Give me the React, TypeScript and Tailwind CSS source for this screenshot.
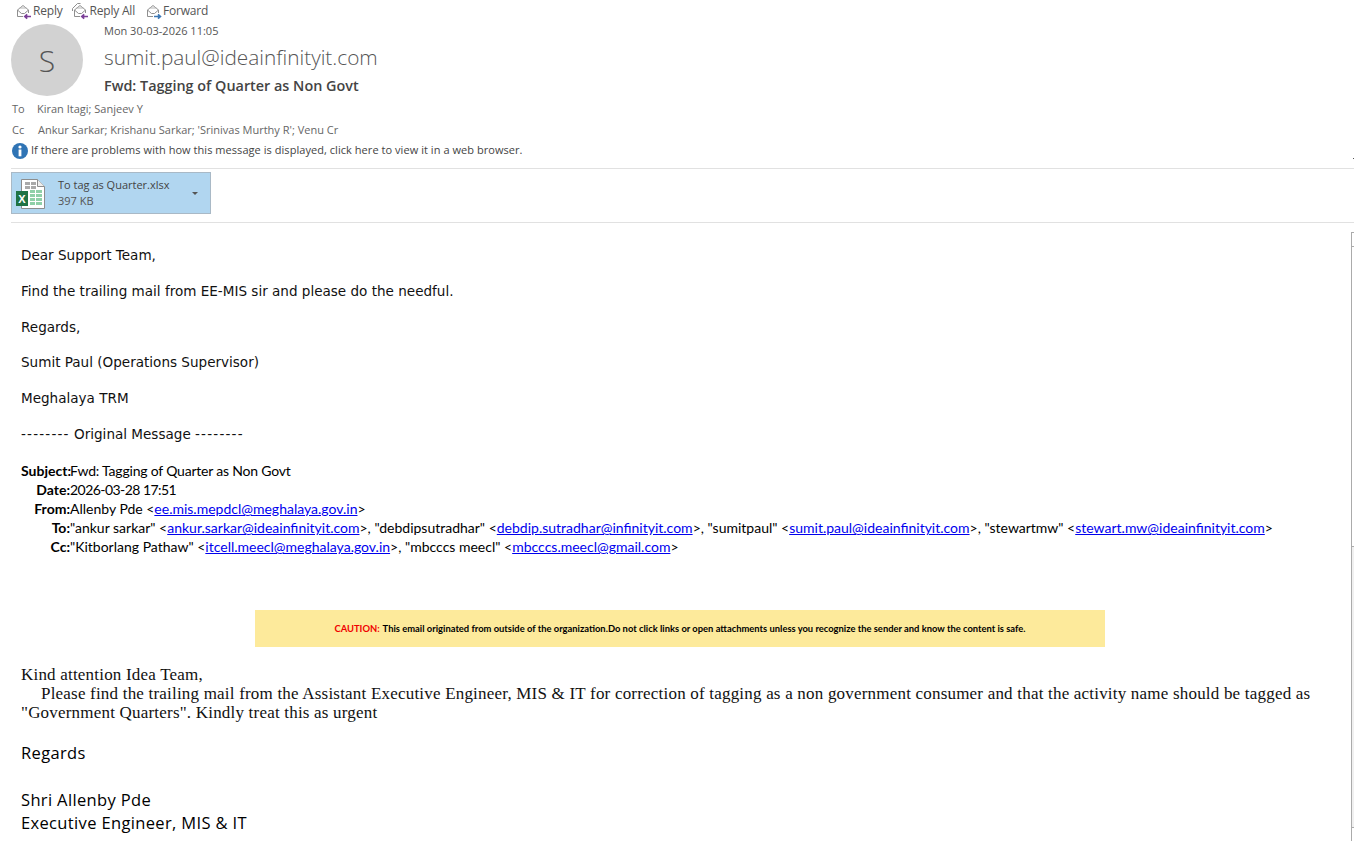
const segoe = "font-['Open_Sans','Noto_Sans',sans-serif]"

function MailIcon({ arrow, double }: { arrow: string; double?: boolean }) {
  const isForward = arrow === '#3f79b5'
  return (
    <svg width="18" height="17" viewBox="0 0 18 17" fill="none" className="shrink-0">
      {double && <path d="M.5 8V5.5L5.5.5h3" stroke="#8f8f8f" />}
      <path d="M8 13.5H2.5V7L8 2.5 13.5 7v3" stroke="#8f8f8f" />
      <path d="M2.5 7 6.5 10.5h3L13.5 7" stroke="#8f8f8f" />
      <path d="M4.5 5.5V5h7v.5" stroke="#b5b5b5" />
      {isForward ? (
        <path d="M9 13.5h6M13 11.3l2.4 2.2-2.4 2.2" stroke={arrow} strokeWidth="1.7" />
      ) : (
        <path d="M16 13.5H10M12.2 11.3 9.8 13.5l2.4 2.2" stroke={arrow} strokeWidth="1.7" />
      )}
    </svg>
  )
}

function ExcelIcon() {
  return (
    <svg width="29" height="31" viewBox="0 0 29 31" className="shrink-0">
      <path d="M5.5.5h16l7 7v22h-23z" fill="#fff" stroke="#8d8d8d" />
      <path d="M21.5.5v7h7" fill="#eeeeee" stroke="#8d8d8d" />
      <rect x="9" y="3" width="5" height="3" fill="#a9a9a9" />
      <rect x="15" y="3" width="5" height="3" fill="#a9a9a9" />
      <rect x="9" y="7" width="5" height="3" fill="#a9a9a9" />
      <rect x="15" y="7" width="5" height="3" fill="#a9a9a9" />
      {[11, 15, 19, 23].map((y) => (
        <g key={y}>
          <rect x="14" y={y} width="5" height="3" fill="#8fd0a8" />
          <rect x="20" y={y} width="6" height="3" fill="#8fd0a8" />
        </g>
      ))}
      <rect x="0" y="12" width="12" height="15" fill="#1f7244" />
      <text x="6" y="24" textAnchor="middle" fontSize="11" fontWeight="700" fill="#fff" fontFamily="Liberation Sans">
        X
      </text>
    </svg>
  )
}

function InfoIcon() {
  return (
    <svg width="16" height="16" viewBox="0 0 16 16" className="shrink-0">
      <circle cx="8" cy="8" r="8" fill="#2f74b5" />
      <circle cx="8" cy="4" r="1.6" fill="#fff" />
      <rect x="6.6" y="6.5" width="2.8" height="6.8" fill="#fff" />
    </svg>
  )
}

function HeaderRow({ label, value }: { label: string; value: React.ReactNode }) {
  return (
    <div className="flex h-[19px] items-center whitespace-nowrap">
      <b className="w-[49px] shrink-0 text-right font-bold">{label}</b>
      <span>{value}</span>
    </div>
  )
}

function Mail({ to }: { to: string }) {
  return <a className="text-[#0000ee] underline">{to}</a>
}

export default function App() {
  return (
    <div className={`relative h-[841px] w-[1354px] overflow-hidden bg-white ${segoe}`}>
      {/* Toolbar */}
      <div className="flex h-[22px] items-center pl-[15px] text-[12px] tracking-[-0.2px] text-[#555]">
        <MailIcon arrow="#7b3f98" />
        <span>Reply</span>
        <span className="ml-[9px]">
          <MailIcon arrow="#7b3f98" double />
        </span>
        <span>Reply All</span>
        <span className="ml-[10px]">
          <MailIcon arrow="#3f79b5" />
        </span>
        <span>Forward</span>
      </div>

      {/* Sender */}
      <div className="flex h-[77px] pt-[2px] pl-[11px]">
        <div className="flex h-[72px] w-[72px] items-center justify-center rounded-full bg-[#d2d2d2] text-[30px] font-light text-[#555]">
          S
        </div>
        <div className="ml-[21px]">
          <div className="h-[17px] text-[11px] leading-[14px] text-[#555]">Mon 30-03-2026 11:05</div>
          <div className="h-[33px] text-[20.8px] leading-[33px] font-light text-[#555]">sumit.paul@ideainfinityit.com</div>
          <div className="text-[14.4px] leading-[24px] font-semibold text-[#444]">Fwd: Tagging of Quarter as Non Govt</div>
        </div>
      </div>

      {/* Recipients */}
      <div className="pl-[12px] text-[11px] text-[#666]">
        <div className="flex h-[21px] items-center">
          <span className="w-[25px]">To</span>
          <span>Kiran Itagi; Sanjeev Y</span>
        </div>
        <div className="flex h-[21px] items-center">
          <span className="w-[26px]">Cc</span>
          <span>Ankur Sarkar; Krishanu Sarkar; 'Srinivas Murthy R'; Venu Cr</span>
        </div>
        <div className="flex h-[19px] items-center tracking-[0.05px] text-[#444]">
          <InfoIcon />
          <span className="ml-[3px]">If there are problems with how this message is displayed, click here to view it in a web browser.</span>
        </div>
      </div>

      {/* Attachment */}
      <div className="mt-[8px] ml-[11px] h-[55px] border-y border-[#e1e1e1] pt-[3px]">
        <div className="flex h-[42px] w-[200px] items-center border border-[#a9b9c6] bg-[#b1d6f0] pl-[4px] text-[11px] leading-[16px] text-[#444]">
          <span className="mt-[2px]">
            <ExcelIcon />
          </span>
          <div className="ml-[13px]">
            <div>To tag as Quarter.xlsx</div>
            <div className="text-[#555]">397 KB</div>
          </div>
          <span className="mt-px ml-[22px] h-0 w-0 border-x-[3px] border-t-[3px] border-x-transparent border-t-[#555]" />
        </div>
      </div>

      {/* Message body */}
      <div className="pl-[21px] pt-[23px]">
        <div className="font-['DejaVu_Sans',sans-serif] text-[13.55px] leading-[18px] text-[#111]">
          <p className="mb-[18px]">Dear Support Team,</p>
          <p className="mb-[18px]">Find the trailing mail from EE-MIS sir and please do the needful.</p>
          <p className="mb-[17px]">Regards,</p>
          <p className="mb-[18px]">Sumit Paul (Operations Supervisor)</p>
          <p className="mb-[18px]">Meghalaya TRM</p>
          <p>
            <span className="tracking-[1.2px]">--------</span> Original Message <span className="tracking-[1.2px]">--------</span>
          </p>
        </div>

        <div className="mt-[18px] font-['Lato',sans-serif] text-[14px] text-black">
          <HeaderRow label="Subject:" value={<span className="tracking-[-0.2px]">Fwd: Tagging of Quarter as Non Govt</span>} />
          <HeaderRow label="Date:" value={<span className="tracking-[-0.55px]">2026-03-28 17:51</span>} />
          <HeaderRow label="From:" value={<>Allenby Pde &lt;<Mail to="ee.mis.mepdcl@meghalaya.gov.in" />&gt;</>} />
          <HeaderRow
            label="To:"
            value={
              <>
                "ankur sarkar" &lt;<Mail to="ankur.sarkar@ideainfinityit.com" />&gt;, "debdipsutradhar" &lt;
                <Mail to="debdip.sutradhar@infinityit.com" />&gt;, "sumitpaul" &lt;
                <Mail to="sumit.paul@ideainfinityit.com" />&gt;, "stewartmw" &lt;
                <Mail to="stewart.mw@ideainfinityit.com" />&gt;
              </>
            }
          />
          <HeaderRow
            label="Cc:"
            value={
              <>
                "Kitborlang Pathaw" &lt;<Mail to="itcell.meecl@meghalaya.gov.in" />&gt;, "mbcccs meecl" &lt;
                <Mail to="mbcccs.meecl@gmail.com" />&gt;
              </>
            }
          />
        </div>

        {/* Caution banner */}
        <div className="mt-[54px] ml-[234px] flex h-[37px] w-[850px] items-center justify-center bg-[#fdea9b] pt-px font-['Lato',sans-serif] text-[9.4px] font-bold text-black">
          <span className="text-[#f00000]">CAUTION:</span>
          <span className="ml-[3px]">This email originated from outside of the organization.Do not click links or open attachments unless you recognize the sender and know the content is safe.</span>
        </div>

        <div className="mt-[18px] whitespace-nowrap font-['Liberation_Serif',serif] text-[17px] leading-[19px] tracking-[0.2px] text-[#111]">
          <p>Kind attention Idea Team,</p>
          <p className="pl-[20px]">Please find the trailing mail from the Assistant Executive Engineer, MIS &amp; IT for correction of tagging as a non government consumer and that the activity name should be tagged as</p>
          <p>"Government Quarters". Kindly treat this as urgent</p>
        </div>

        <div className="mt-[21px] font-['Open_Sans',sans-serif] text-[16.5px] tracking-[0.35px] text-black">
          <p className="h-[47px] leading-[19px]">Regards</p>
          <p className="h-[23px] leading-[19px]">Shri Allenby Pde</p>
          <p className="h-[23px] leading-[19px]">Executive Engineer, MIS &amp; IT</p>
        </div>
      </div>

      {/* Scrollbar */}
      <div className="absolute top-[232px] right-0 bottom-0 flex w-[3px] flex-col border-l border-[#ababab] bg-[#f0f0f0]">
        <div className="h-[15px] border-t border-b border-[#ababab] bg-white" />
        <div className="h-[300px] border-b border-[#ababab] bg-white" />
        <div className="flex-1" />
        <div className="h-[14px] border-t border-[#ababab] bg-white" />
      </div>
      <div className="absolute top-[158px] right-0 h-px w-px bg-[#555]" />
    </div>
  )
}
